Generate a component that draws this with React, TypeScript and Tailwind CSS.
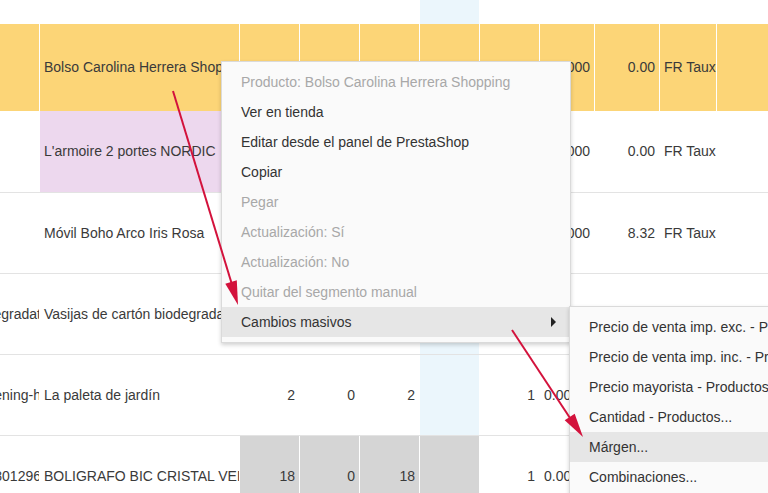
import React from "react";

const W = [
  "w-[40px]",
  "w-[200px]",
  "w-[60px]",
  "w-[60px]",
  "w-[60px]",
  "w-[60px]",
  "w-[60px]",
  "w-[55px]",
  "w-[65px]",
  "w-[57px]",
  "w-[120px]",
];

type CellDef = {
  t?: string;
  bg?: string;
  align?: "l" | "r" | "end";
};

function Row({
  cells,
  h,
  rowBg,
  border,
}: {
  cells: CellDef[];
  h: string;
  rowBg?: string;
  border?: boolean;
}) {
  return (
    <div className={`flex shrink-0 ${h} ${border ? "border-b border-[#e3e3e3]" : ""}`}>
      {W.map((w, i) => {
        const c = cells[i] || {};
        const isBlue = i === 5 && !c.bg && !rowBg;
        const bg = c.bg || rowBg || (isBlue ? "bg-[#ebf6fc]" : "bg-white");
        if (c.align === "end") {
          return (
            <div
              key={i}
              className={`${w} ${bg} shrink-0 h-full border-r border-white flex items-center justify-end overflow-hidden`}
            >
              <span className="whitespace-nowrap -mr-[2px]">{c.t}</span>
            </div>
          );
        }
        return (
          <div
            key={i}
            className={`${w} ${bg} shrink-0 h-full border-r border-white flex items-center overflow-hidden px-[4px] ${
              c.align === "r" ? "justify-end" : "justify-start"
            }`}
          >
            {c.t ? <span className="whitespace-nowrap">{c.t}</span> : null}
          </div>
        );
      })}
    </div>
  );
}

function MenuItem({
  label,
  disabled,
  active,
  sub,
}: {
  label: string;
  disabled?: boolean;
  active?: boolean;
  sub?: boolean;
}) {
  return (
    <div
      className={`h-[30px] flex items-center pl-[19px] pr-[14px] whitespace-nowrap ${
        active ? "bg-[#e6e6e6]" : ""
      } ${disabled ? "text-[#a8a8a8]" : "text-[#333333]"}`}
    >
      <span className="flex-1">{label}</span>
      {sub ? (
        <span className="w-0 h-0 border-y-[5px] border-y-transparent border-l-[5px] border-l-[#222]" />
      ) : null}
    </div>
  );
}

export default function App() {
  const Y = "bg-[#fcd577]";
  return (
    <div className="relative w-[768px] h-[493px] overflow-hidden bg-white font-['Liberation_Sans',Arial,sans-serif] text-[14px] text-[#3a3a3a]">
      <div className="flex flex-col">
        <Row h="h-[24px]" cells={[]} />
        <Row
          h="h-[87px]"
          rowBg={Y}
          cells={[
            {},
            { t: "Bolso Carolina Herrera Shopping" },
            {},
            {},
            {},
            {},
            {},
            { t: "0.0000", align: "r" },
            { t: "0.00", align: "r" },
            { t: "FR Taux" },
          ]}
        />
        <Row
          h="h-[82px]"
          border
          cells={[
            {},
            { t: "L'armoire 2 portes NORDIC", bg: "bg-[#edd8ee]" },
            {},
            {},
            {},
            {},
            {},
            { t: "0.0000", align: "r" },
            { t: "0.00", align: "r" },
            { t: "FR Taux" },
          ]}
        />
        <Row
          h="h-[81px]"
          border
          cells={[
            {},
            { t: "Móvil Boho Arco Iris Rosa" },
            {},
            {},
            {},
            {},
            {},
            { t: "0.0000", align: "r" },
            { t: "8.32", align: "r" },
            { t: "FR Taux" },
          ]}
        />
        <Row
          h="h-[81px]"
          border
          cells={[
            { t: "vasijas-biodegradat", align: "end" },
            { t: "Vasijas de cartón biodegradadas" },
          ]}
        />
        <Row
          h="h-[81px]"
          border
          cells={[
            { t: "gardening-h", align: "end" },
            { t: "La paleta de jardín" },
            { t: "2", align: "r" },
            { t: "0", align: "r" },
            { t: "2", align: "r" },
            {},
            { t: "1", align: "r" },
            { t: "0.0000", align: "l" },
          ]}
        />
        <Row
          h="h-[81px]"
          cells={[
            { t: "3086123801296", align: "end" },
            { t: "BOLIGRAFO BIC CRISTAL VERDE" },
            { t: "18", align: "r", bg: "bg-[#d5d5d5]" },
            { t: "0", align: "r", bg: "bg-[#d5d5d5]" },
            { t: "18", align: "r", bg: "bg-[#d5d5d5]" },
            { bg: "bg-[#d5d5d5]" },
            { t: "1", align: "r" },
            { t: "0.0000", align: "l" },
          ]}
        />
      </div>

      {/* Context menu */}
      <div className="absolute left-[221px] top-[61px] w-[350px] bg-[#fafafa] border border-[#dadada] shadow-[0_2px_4px_rgba(0,0,0,0.18)] py-[5px]">
        <MenuItem label="Producto: Bolso Carolina Herrera Shopping" disabled />
        <MenuItem label="Ver en tienda" />
        <MenuItem label="Editar desde el panel de PrestaShop" />
        <MenuItem label="Copiar" />
        <MenuItem label="Pegar" disabled />
        <MenuItem label="Actualización: Sí" disabled />
        <MenuItem label="Actualización: No" disabled />
        <MenuItem label="Quitar del segmento manual" disabled />
        <MenuItem label="Cambios masivos" active sub />
      </div>

      {/* Submenu */}
      <div className="absolute left-[569px] top-[306px] w-[280px] bg-[#fafafa] border border-[#dadada] shadow-[0_2px_4px_rgba(0,0,0,0.18)] py-[5px]">
        <MenuItem label="Precio de venta imp. exc. - Productos..." />
        <MenuItem label="Precio de venta imp. inc. - Productos..." />
        <MenuItem label="Precio mayorista - Productos..." />
        <MenuItem label="Cantidad - Productos..." />
        <MenuItem label="Márgen..." active />
        <MenuItem label="Combinaciones..." />
      </div>

      {/* Annotation arrows */}
      <svg
        className="absolute inset-0 pointer-events-none"
        width="768"
        height="493"
        viewBox="0 0 768 493"
      >
        <line x1="173" y1="91" x2="231.5" y2="283" stroke="#d3123c" strokeWidth="2" />
        <polygon points="238,305 225.3,283.8 236.8,280.3" fill="#d3123c" />
        <line x1="512" y1="330" x2="570" y2="418" stroke="#d3123c" strokeWidth="2" />
        <polygon points="583,437 564.7,420.3 574.7,413.7" fill="#d3123c" />
      </svg>
    </div>
  );
}
